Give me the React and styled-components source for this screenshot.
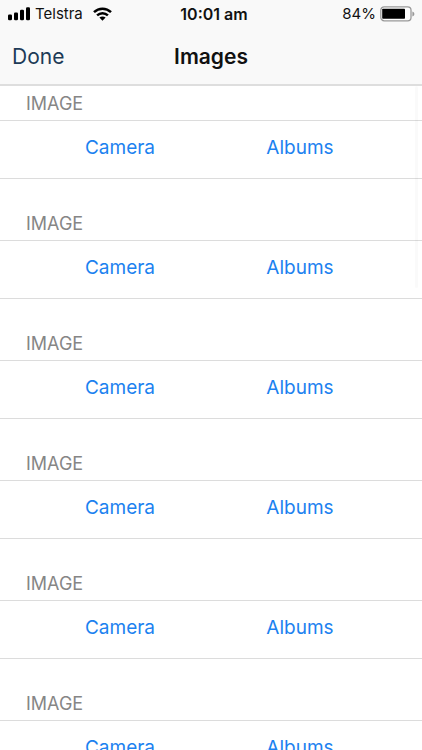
import React from 'react'
import styled, { createGlobalStyle } from 'styled-components'

const sections = ['image-1', 'image-2', 'image-3', 'image-4', 'image-5', 'image-6']

const App = () => {
  return (
    <>
      <GlobalStyle />
      <Screen>
        <TopBar>
          <StatusBar>
            <div className='side'>
              <Signal />
              <span>Telstra</span>
              <Wifi />
            </div>
            <Clock>10:01 am</Clock>
            <div className='side right'>
              <span>84%</span>
              <Battery />
            </div>
          </StatusBar>
          <NavBar>
            <DoneButton type='button'>Done</DoneButton>
            <h1>Images</h1>
          </NavBar>
        </TopBar>
        <List>
          {sections.map((id, i) => (
            <section key={id} aria-labelledby={id}>
              <SectionTitle id={id} $first={i === 0}>
                IMAGE
              </SectionTitle>
              <Row>
                <ActionButton type='button'>Camera</ActionButton>
                <ActionButton type='button'>Albums</ActionButton>
              </Row>
            </section>
          ))}
          <ScrollIndicator />
        </List>
      </Screen>
    </>
  )
}

const Signal = () => (
  <svg width='23' height='14' viewBox='0 0 23 14' aria-hidden='true'>
    <rect x='0' y='7.4' width='4' height='5.8' rx='1.2' />
    <rect x='6' y='5.4' width='4' height='7.8' rx='1.2' />
    <rect x='12' y='2.8' width='4' height='10.4' rx='1.2' />
    <rect x='18' y='0.2' width='4' height='13' rx='1.2' />
  </svg>
)

const Wifi = () => (
  <svg width='19' height='14' viewBox='0 0 19 14' aria-hidden='true'>
    <g fill='none' stroke='#000' strokeWidth='2.5'>
      <path d='M1 5.2C5.8 0.6 13.2 0.6 18 5.2' />
      <path d='M4.1 8.4C7.2 5.5 11.8 5.5 14.9 8.4' />
    </g>
    <path d='M6.4 10.6C8.2 9 10.8 9 12.6 10.6L9.5 13.7Z' />
  </svg>
)

const Battery = () => (
  <svg width='36' height='16' viewBox='0 0 36 16' aria-hidden='true'>
    <rect x='0.8' y='0.8' width='30.2' height='14' rx='3.4' fill='#fff' stroke='#999' strokeWidth='1.3' />
    <rect x='2.2' y='2.8' width='22.8' height='10' rx='0.8' />
    <path d='M32.4 5.4C35 6.2 35 9.6 32.4 10.4Z' fill='#999' />
  </svg>
)

const GlobalStyle = createGlobalStyle`
  * {
    box-sizing: border-box;
  }
  body {
    margin: 0;
    background: #fff;
    font-family: Inter, 'Liberation Sans', sans-serif;
  }
  button {
    border: 0;
    padding: 0;
    background: none;
    font-family: inherit;
    cursor: pointer;
  }
`

const Screen = styled.div`
  display: flex;
  flex-direction: column;
  height: 100vh;
  overflow: hidden;
`

const TopBar = styled.header`
  flex: none;
  background: #f9f9f9;
  border-bottom: 2px solid #dedede;
`

const StatusBar = styled.div`
  display: grid;
  grid-template-columns: 1fr auto 1fr;
  align-items: center;
  height: 28px;
  padding: 0 6px 0 8px;
  font-size: 15px;
  line-height: 20px;
  color: #111;
  .side {
    display: flex;
    align-items: center;
    gap: 4px;
  }
  .side > svg:last-child {
    margin-left: 6px;
  }
  .right {
    justify-content: flex-end;
    gap: 0;
  }
  .right > svg:last-child {
    margin-left: 4px;
  }
`

const Clock = styled.span`
  padding-left: 4px;
  font-size: 16px;
  font-weight: 600;
`

const NavBar = styled.div`
  display: grid;
  grid-template-columns: 1fr auto 1fr;
  align-items: center;
  height: 56px;
  padding: 2px 12px 0;
  h1 {
    margin: 0;
    font-size: 21px;
    line-height: 28px;
    font-weight: 600;
    color: #111;
  }
`

const DoneButton = styled.button`
  justify-self: start;
  font-size: 21px;
  line-height: 28px;
  color: #1d3b57;
`

const List = styled.main`
  position: relative;
  flex: 1;
  min-height: 0;
  overflow: hidden;
`

const SectionTitle = styled.h2`
  display: flex;
  align-items: flex-end;
  height: ${({ $first }) => ($first ? 34 : 61)}px;
  margin: 0;
  padding: 0 26px 4px;
  font-size: 18px;
  line-height: 24px;
  font-weight: 400;
  color: #868686;
`

const Row = styled.div`
  display: grid;
  grid-template-columns: 1fr 1fr;
  height: 59px;
  padding: 0 32px 3px 30px;
  border-top: 1px solid #dcdcdc;
  border-bottom: 1px solid #dcdcdc;
`

const ActionButton = styled.button`
  font-size: 19px;
  line-height: 24px;
  color: #1c82f0;
`

const ScrollIndicator = styled.div`
  position: absolute;
  top: 0;
  right: 4px;
  width: 3px;
  height: 202px;
  border-radius: 2px;
  background: rgba(0, 0, 0, 0.02);
`

export default App
